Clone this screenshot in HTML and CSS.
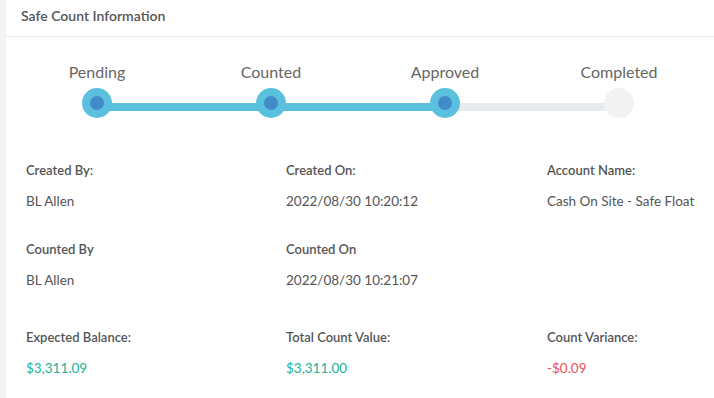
FILE: index.html
```html
<!DOCTYPE html>
<html lang="en">
<head>
    <meta charset="UTF-8">
    <meta name="viewport" content="width=device-width, initial-scale=1.0">
    <title>Safe Count Information</title>
    <link rel="stylesheet" href="styles.css">
</head>
<body>
    <div class="card">
        <!-- Titre -->
        <div class="card-header">Safe Count Information</div>

        <!-- Etapes -->
        <ul class="stepper">
            <li class="step done">
                <span class="step-label">Pending</span>
                <span class="step-dot"></span>
            </li>
            <li class="step done">
                <span class="step-label">Counted</span>
                <span class="step-dot"></span>
            </li>
            <li class="step current">
                <span class="step-label">Approved</span>
                <span class="step-dot"></span>
            </li>
            <li class="step">
                <span class="step-label">Completed</span>
                <span class="step-dot"></span>
            </li>
        </ul>

        <!-- Informations -->
        <div class="info-row">
            <div class="info">
                <div class="info-label">Created By:</div>
                <div class="info-value">BL Allen</div>
            </div>
            <div class="info">
                <div class="info-label">Created On:</div>
                <div class="info-value">2022/08/30 10:20:12</div>
            </div>
            <div class="info">
                <div class="info-label">Account Name:</div>
                <div class="info-value">Cash On Site - Safe Float</div>
            </div>
        </div>

        <div class="info-row second">
            <div class="info">
                <div class="info-label">Counted By</div>
                <div class="info-value">BL Allen</div>
            </div>
            <div class="info">
                <div class="info-label">Counted On</div>
                <div class="info-value">2022/08/30 10:21:07</div>
            </div>
            <div class="info"></div>
        </div>

        <div class="info-row">
            <div class="info">
                <div class="info-label">Expected Balance:</div>
                <div class="info-value positive">$3,311.09</div>
            </div>
            <div class="info">
                <div class="info-label">Total Count Value:</div>
                <div class="info-value positive">$3,311.00</div>
            </div>
            <div class="info">
                <div class="info-label">Count Variance:</div>
                <div class="info-value negative">-$0.09</div>
            </div>
        </div>
    </div>
</body>
</html>
```

FILE: styles.css
```css
/* Base */
body {
    margin: 0;
    background-color: #f3f3f3;
    font-family: Lato, "Noto Sans", sans-serif;
    color: #555;
    overflow: hidden;
}

.card {
    margin-left: 6px;
    background-color: #fff;
    min-height: 398px;
    overflow: hidden;
}

.card-header {
    height: 36px;
    line-height: 31px;
    padding: 0 15px;
    font-size: 14px;
    font-weight: 600;
    color: #555;
    border-bottom: 1px solid #e9e9e9;
}

/* Etapes */
.stepper {
    display: flex;
    list-style: none;
    margin: 0;
    padding: 25px 8px 0 4px;
}

.step {
    flex: 1;
    display: flex;
    flex-direction: column;
    align-items: center;
    position: relative;
}

.step-label {
    font-size: 16px;
    line-height: 20px;
    color: #666;
    margin-bottom: 6px;
}

.step-dot {
    width: 30px;
    height: 30px;
    border-radius: 50%;
    background-color: #f2f2f2;
    position: relative;
    z-index: 1;
}

.step.done .step-dot,
.step.current .step-dot {
    background-color: #5bc0de;
}

.step.done .step-dot::after,
.step.current .step-dot::after {
    content: "";
    position: absolute;
    top: 8px;
    left: 8px;
    width: 14px;
    height: 14px;
    border-radius: 50%;
    background-color: #428bca;
}

/* Trait entre les étapes */
.step::after {
    content: "";
    position: absolute;
    top: 41px;
    left: 50%;
    width: 100%;
    height: 8px;
    background-color: #e8ebee;
}

.step.done::after {
    background-color: #5bc0de;
}

.step:last-child::after {
    display: none;
}

/* Informations */
.info-row {
    display: grid;
    grid-template-columns: 260px 261px 261px;
    padding: 0 20px;
    margin-top: 42px;
    white-space: nowrap;
}

.info-row.second {
    margin-top: 28px;
}

.info-row.second + .info-row {
    margin-top: 37px;
}

.info-label {
    font-size: 13px;
    font-weight: 600;
    line-height: 20px;
    color: #555;
}

.info-value {
    font-size: 13.5px;
    line-height: 20px;
    margin-top: 11px;
    color: #555;
}

.info-value.positive {
    color: #1ab394;
}

.info-value.negative {
    color: #e8505b;
}
```
